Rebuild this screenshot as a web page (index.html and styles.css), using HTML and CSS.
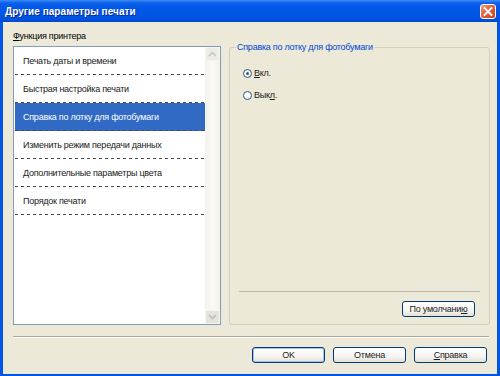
FILE: index.html
```html
<!DOCTYPE html>
<html lang="ru">
<head>
<meta charset="utf-8">
<title>Другие параметры печати</title>
<link rel="stylesheet" href="styles.css">
</head>
<body>
<div class="window">
  <div class="titlebar">
    <span class="title">Другие параметры печати</span>
    <span class="close"><svg width="14" height="13" viewBox="0 0 14 13"><path d="M3.5 3 L10.5 10 M10.5 3 L3.5 10" stroke="#fff" stroke-width="1.8" stroke-linecap="square"/></svg></span>
  </div>
  <div class="body">
    <div class="label"><u>Ф</u>ункция принтера</div>
    <div class="main">
      <div class="listbox">
        <ul class="items">
          <li class="item"><span class="text">Печать даты и времени</span></li>
          <li class="item"><span class="text">Быстрая настройка печати</span></li>
          <li class="item selected"><span class="text">Справка по лотку для фотобумаги</span></li>
          <li class="item"><span class="text">Изменить режим передачи данных</span></li>
          <li class="item"><span class="text">Дополнительные параметры цвета</span></li>
          <li class="item"><span class="text">Порядок печати</span></li>
        </ul>
        <div class="scrollbar">
          <div class="sb-btn"><svg width="9" height="6" viewBox="0 0 9 6"><path d="M1 5 L4.5 1.5 L8 5" fill="none" stroke="#C3C6CF" stroke-width="1.6"/></svg></div>
          <div class="sb-track"></div>
          <div class="sb-btn down"><svg width="9" height="6" viewBox="0 0 9 6"><path d="M1 1 L4.5 4.5 L8 1" fill="none" stroke="#B9BCC4" stroke-width="1.6"/></svg></div>
        </div>
      </div>
      <div class="group">
        <span class="legend">Справка по лотку для фотобумаги</span>
        <div class="radios">
          <div class="radio"><span class="circle checked"></span><span><u>В</u>кл.</span></div>
          <div class="radio"><span class="circle"></span><span>Вык<u>л</u>.</span></div>
        </div>
        <div class="spacer"></div>
        <div class="inner-line"></div>
        <div class="group-actions"><button class="btn">По умолчани<u>ю</u></button></div>
      </div>
    </div>
    <div class="separator"></div>
    <div class="actions">
      <button class="btn default">OK</button>
      <button class="btn">Отмена</button>
      <button class="btn"><u>С</u>правка</button>
    </div>
  </div>
</div>
</body>
</html>
```
FILE: styles.css
```css
* { box-sizing: border-box; margin: 0; padding: 0; }
html, body { width: 500px; height: 376px; overflow: hidden; }
body {
  font-family: "Liberation Sans", Arial, sans-serif;
  font-size: 9px;
  letter-spacing: -0.25px;
  color: #000;
  background: #0055E5;
}
u { text-decoration: underline; text-underline-offset: 1px; }

.window { width: 500px; height: 376px; display: flex; flex-direction: column; }

.titlebar {
  height: 22px;
  flex: none;
  display: flex;
  align-items: center;
  justify-content: space-between;
  padding: 0 4px 0 5px;
  background: linear-gradient(to bottom, #3C8CF6 0, #0D5FEA 3px, #0058E8 8px, #0055E5 15px, #0052E0 19px, #0047D0 22px);
}
.title {
  color: #fff;
  font-weight: bold;
  font-size: 10px;
  text-shadow: 1px 1px 0 #0B2A8A;
  letter-spacing: 0.05px;
}
.close {
  width: 16px;
  height: 15px;
  border: 1px solid #fff;
  border-radius: 3px;
  background: linear-gradient(135deg, #F29A7A 0%, #E2643C 45%, #C8401A 100%);
  display: flex;
  align-items: center;
  justify-content: center;
}

.body {
  flex: 1;
  background: #ECE9D8;
  border-style: solid;
  border-color: #0055E5;
  border-width: 0 3px 2px 3px;
  padding: 7px 7px 11px 10px;
  display: flex;
  flex-direction: column;
}

.label { height: 14px; line-height: 14px; margin-bottom: 3px; }

.main { height: 279px; display: flex; gap: 8px; flex: none; }

.listbox {
  width: 208px;
  height: 279px;
  border: 1px solid #7F9DB9;
  background: #fff;
  display: flex;
}
.items { flex: 1; list-style: none; margin-left: 1px; }
.item { height: 28px; display: flex; flex-direction: column; }
.item .text { height: 27px; display: flex; align-items: center; padding-left: 8px; color: #1A1A1A; }
.item::after {
  content: "";
  display: block;
  height: 1px;
  background: repeating-linear-gradient(to right, #4A4A4A 0 3px, transparent 3px 6px);
}
.item.selected { background: #316AC5; }
.item.selected .text { color: #fff; }

.scrollbar {
  width: 15px;
  display: flex;
  flex-direction: column;
  background: #F5F4EE;
}
.sb-btn {
  height: 14px;
  display: flex;
  align-items: center;
  justify-content: center;
  background: #EEEDE5;
  border: 1px solid #F6F5F0;
}
.sb-btn.down { background: #E6E4DA; }
.sb-track { flex: 1; background: linear-gradient(to right, #F3F1EA, #FBFAF7 50%, #F3F1EA); }

.group {
  width: 261px;
  height: 278px;
  margin-top: 1px;
  border: 1px solid #D0D0BF;
  border-radius: 3px;
  display: flex;
  flex-direction: column;
  padding: 0 9px 7px 9px;
}
.legend {
  align-self: flex-start;
  margin: -7px 0 0 -3px;
  padding: 0 1px;
  line-height: 13px;
  height: 13px;
  background: #ECE9D8;
  color: #0046D5;
}
.radios { margin-top: 12px; display: flex; flex-direction: column; gap: 8px; }
.radio { height: 14px; display: flex; align-items: center; padding-left: 4px; gap: 2px; color: #1A1A1A; }
.circle {
  width: 9px;
  height: 9px;
  border-radius: 50%;
  border: 1px solid #2A5A8A;
  background: radial-gradient(circle at 40% 40%, #fff 0, #F0EFE8 100%);
  display: flex;
  align-items: center;
  justify-content: center;
}
.circle.checked::after {
  content: "";
  width: 3px;
  height: 3px;
  border-radius: 50%;
  background: #3F5F45;
}
.spacer { flex: 1; }
.inner-line { height: 1px; background: #BDBAAD; margin-bottom: 9px; }
.group-actions { display: flex; justify-content: flex-end; padding-right: 5px; }

.btn {
  width: 73px;
  height: 16px;
  font-family: inherit;
  font-size: 9px;
  letter-spacing: -0.25px;
  color: #1A1A1A;
  border: 1px solid #003C74;
  border-radius: 3px;
  background: linear-gradient(to bottom, #FFFFFF 0%, #F6F5F1 60%, #E4E1D6 100%);
  line-height: 14px;
  text-align: center;
}
.btn.default { box-shadow: inset 0 0 0 1px #A9C0EC; }

.separator {
  margin-top: 11px;
  margin-right: 1px;
  height: 2px;
  border-top: 1px solid #ACA899;
  border-bottom: 1px solid #FFFFFF;
}
.actions {
  margin-top: 9px;
  display: flex;
  justify-content: flex-end;
  gap: 8px;
  padding-right: 3px;
}
```
